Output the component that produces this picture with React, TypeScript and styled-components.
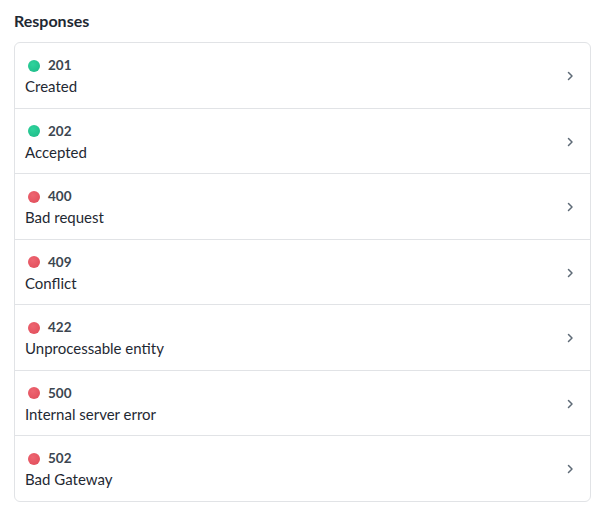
import styled, { createGlobalStyle } from "styled-components";

const GlobalStyle = createGlobalStyle`
    body {
        margin: 0;
        background: #ffffff;
        font-family: Lato, "Liberation Sans", sans-serif;
        color: #1f2933;
    }
`;

const Page = styled.div`
    padding: 11px 20px 16px 14px;
`;

const Title = styled.h2`
    margin: 0 0 11px 0;
    font-size: 16px;
    line-height: 20px;
    font-weight: 700;
    color: #1f2933;
`;

const Card = styled.div`
    border: 1px solid #e1e3e6;
    border-radius: 6px;
    overflow: hidden;
`;

const Row = styled.div`
    display: flex;
    align-items: center;
    justify-content: space-between;
    padding: 14px 15px 10px 10px;
    height: 40.5px;
    border-top: 1px solid #e1e3e6;

    &:first-child {
        border-top: none;
    }
`;

const Info = styled.div`
    display: flex;
    flex-direction: column;
    gap: 2px;
`;

const CodeLine = styled.div`
    display: flex;
    align-items: center;
    gap: 8px;
    padding-left: 3px;
`;

const Dot = styled.span<{ $ok: boolean }>`
    width: 12px;
    height: 12px;
    border-radius: 50%;
    background: ${(p) =>
        p.$ok
            ? "radial-gradient(circle at 40% 35%, #2fd39c, #1cb886)"
            : "radial-gradient(circle at 40% 35%, #ee6571, #df4b58)"};
`;

const Code = styled.span`
    font-weight: 700;
    font-size: 13.5px;
    line-height: 17px;
    color: #3c4650;
`;

const Label = styled.span`
    font-size: 15px;
    line-height: 21px;
    color: #1f2933;
`;

const ChevronIcon = styled.svg`
    width: 10px;
    height: 12px;
    margin-top: -2px;
    flex-shrink: 0;
`;

const Chevron = () => (
    <ChevronIcon viewBox="0 0 10 12">
        <path d="M3.5 2.5 L7 6 L3.5 9.5" fill="none" stroke="#5f6b77" strokeWidth="1.5" strokeLinecap="round" strokeLinejoin="round" />
    </ChevronIcon>
);

const responses = [
    { code: "201", text: "Created" },
    { code: "202", text: "Accepted" },
    { code: "400", text: "Bad request" },
    { code: "409", text: "Conflict" },
    { code: "422", text: "Unprocessable entity" },
    { code: "500", text: "Internal server error" },
    { code: "502", text: "Bad Gateway" },
];

export default function App() {
    return (
        <Page>
            <GlobalStyle />
            <Title>Responses</Title>
            <Card>
                {responses.map((r) => (
                    <Row key={r.code}>
                        <Info>
                            <CodeLine>
                                <Dot $ok={r.code.startsWith("2")} />
                                <Code>{r.code}</Code>
                            </CodeLine>
                            <Label>{r.text}</Label>
                        </Info>
                        <Chevron />
                    </Row>
                ))}
            </Card>
        </Page>
    );
}
